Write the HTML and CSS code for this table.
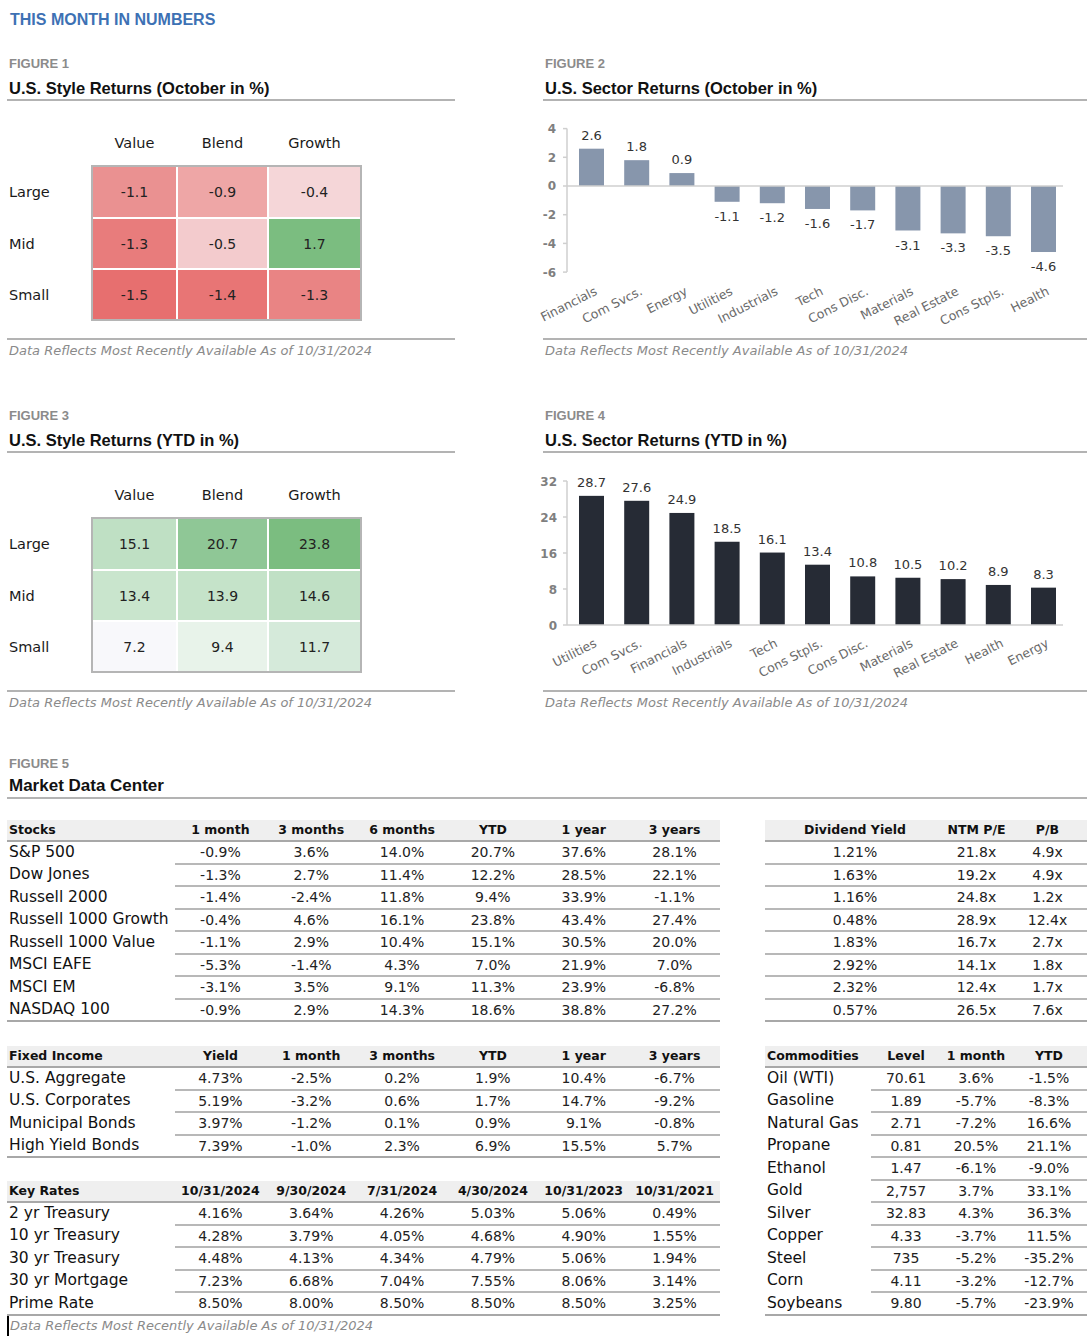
FILE: index.html
```html
<!DOCTYPE html>
<html lang="en">
<head>
<meta charset="utf-8">
<title>This Month in Numbers</title>
<link rel="stylesheet" href="styles.css">
</head>
<body>
<div class="page">
  <h1 class="page-title">THIS MONTH IN NUMBERS</h1>

  <div class="figs">
    <section class="fig">
      <div class="fig-label">FIGURE 1</div>
      <h2 class="fig-title">U.S. Style Returns (October in %)</h2>
      <div class="fig-body">
        <div class="heat">
          <div class="heat-cols"><span>Value</span><span>Blend</span><span>Growth</span></div>
          <div class="heat-main">
            <div class="heat-rows"><span>Large</span><span>Mid</span><span>Small</span></div>
            <div class="heat-grid">
              <div class="cell" style="background:#ea9191">-1.1</div>
              <div class="cell" style="background:#eea6a6">-0.9</div>
              <div class="cell" style="background:#f5d6d8">-0.4</div>
              <div class="cell" style="background:#e87c7c">-1.3</div>
              <div class="cell" style="background:#f3cbcd">-0.5</div>
              <div class="cell" style="background:#7bbd80">1.7</div>
              <div class="cell" style="background:#e76f6f">-1.5</div>
              <div class="cell" style="background:#e87575">-1.4</div>
              <div class="cell" style="background:#e98484">-1.3</div>
            </div>
          </div>
        </div>
      </div>
      <div class="fig-note">Data Reflects Most Recently Available As of 10/31/2024</div>
    </section>

    <section class="fig">
      <div class="fig-label">FIGURE 2</div>
      <h2 class="fig-title">U.S. Sector Returns (October in %)</h2>
      <div class="fig-body">
        <svg class="chart" width="544" height="239" viewBox="0 0 544 239">
          <g class="grid-lines">
            <line x1="24" y1="27.6" x2="24" y2="171.1"/>
            <line x1="20" y1="27.6" x2="24" y2="27.6"/>
            <line x1="20" y1="56.3" x2="24" y2="56.3"/>
            <line x1="20" y1="85" x2="24" y2="85"/>
            <line x1="20" y1="113.7" x2="24" y2="113.7"/>
            <line x1="20" y1="142.4" x2="24" y2="142.4"/>
            <line x1="20" y1="171.1" x2="24" y2="171.1"/>
          </g>
          <g class="ax" text-anchor="end">
            <text x="13" y="32">4</text>
            <text x="13" y="60.7">2</text>
            <text x="13" y="89.4">0</text>
            <text x="13" y="118.1">-2</text>
            <text x="13" y="146.8">-4</text>
            <text x="13" y="175.5">-6</text>
          </g>
          <g class="bars-light">
            <rect x="36" y="47.69" width="25" height="37.31"/>
            <rect x="81.2" y="59.17" width="25" height="25.83"/>
            <rect x="126.4" y="72.08" width="25" height="12.92"/>
            <rect x="171.6" y="85" width="25" height="15.79"/>
            <rect x="216.8" y="85" width="25" height="17.22"/>
            <rect x="262" y="85" width="25" height="22.96"/>
            <rect x="307.2" y="85" width="25" height="24.4"/>
            <rect x="352.4" y="85" width="25" height="44.49"/>
            <rect x="397.6" y="85" width="25" height="47.36"/>
            <rect x="442.8" y="85" width="25" height="50.23"/>
            <rect x="488" y="85" width="25" height="66.01"/>
          </g>
          <line class="zero" x1="24" y1="85" x2="520" y2="85"/>
          <g class="val" text-anchor="middle">
            <text x="48.5" y="38.7">2.6</text>
            <text x="93.7" y="50.2">1.8</text>
            <text x="138.9" y="63.1">0.9</text>
            <text x="184.1" y="119.8">-1.1</text>
            <text x="229.3" y="121.2">-1.2</text>
            <text x="274.5" y="127">-1.6</text>
            <text x="319.7" y="128.4">-1.7</text>
            <text x="364.9" y="148.5">-3.1</text>
            <text x="410.1" y="151.4">-3.3</text>
            <text x="455.3" y="154.2">-3.5</text>
            <text x="500.5" y="170">-4.6</text>
          </g>
          <g class="cat" text-anchor="end">
            <text transform="translate(55,193) rotate(-27)">Financials</text>
            <text transform="translate(100.2,193) rotate(-27)">Com Svcs.</text>
            <text transform="translate(145.4,193) rotate(-27)">Energy</text>
            <text transform="translate(190.6,193) rotate(-27)">Utilities</text>
            <text transform="translate(235.8,193) rotate(-27)">Industrials</text>
            <text transform="translate(281,193) rotate(-27)">Tech</text>
            <text transform="translate(326.2,193) rotate(-27)">Cons Disc.</text>
            <text transform="translate(371.4,193) rotate(-27)">Materials</text>
            <text transform="translate(416.6,193) rotate(-27)">Real Estate</text>
            <text transform="translate(461.8,193) rotate(-27)">Cons Stpls.</text>
            <text transform="translate(507,193) rotate(-27)">Health</text>
          </g>
        </svg>
      </div>
      <div class="fig-note">Data Reflects Most Recently Available As of 10/31/2024</div>
    </section>

    <section class="fig">
      <div class="fig-label">FIGURE 3</div>
      <h2 class="fig-title">U.S. Style Returns (YTD in %)</h2>
      <div class="fig-body">
        <div class="heat">
          <div class="heat-cols"><span>Value</span><span>Blend</span><span>Growth</span></div>
          <div class="heat-main">
            <div class="heat-rows"><span>Large</span><span>Mid</span><span>Small</span></div>
            <div class="heat-grid">
              <div class="cell" style="background:#bfe0c4">15.1</div>
              <div class="cell" style="background:#8fc796">20.7</div>
              <div class="cell" style="background:#7bbd80">23.8</div>
              <div class="cell" style="background:#c9e5cd">13.4</div>
              <div class="cell" style="background:#c5e3c9">13.9</div>
              <div class="cell" style="background:#c0e0c5">14.6</div>
              <div class="cell" style="background:#f8f8fb">7.2</div>
              <div class="cell" style="background:#e8f3ea">9.4</div>
              <div class="cell" style="background:#d5eada">11.7</div>
            </div>
          </div>
        </div>
      </div>
      <div class="fig-note">Data Reflects Most Recently Available As of 10/31/2024</div>
    </section>

    <section class="fig">
      <div class="fig-label">FIGURE 4</div>
      <h2 class="fig-title">U.S. Sector Returns (YTD in %)</h2>
      <div class="fig-body">
        <svg class="chart" width="544" height="239" viewBox="0 0 544 239">
          <g class="grid-lines">
            <line x1="24" y1="28" x2="24" y2="172"/>
            <line x1="20" y1="28" x2="24" y2="28"/>
            <line x1="20" y1="64" x2="24" y2="64"/>
            <line x1="20" y1="100" x2="24" y2="100"/>
            <line x1="20" y1="136" x2="24" y2="136"/>
            <line x1="20" y1="172" x2="24" y2="172"/>
          </g>
          <g class="ax" text-anchor="end">
            <text x="14" y="32.5">32</text>
            <text x="14" y="68.5">24</text>
            <text x="14" y="104.5">16</text>
            <text x="14" y="140.5">8</text>
            <text x="14" y="176.5">0</text>
          </g>
          <g class="bars-dark">
            <rect x="36" y="42.85" width="25" height="129.15"/>
            <rect x="81.2" y="47.8" width="25" height="124.2"/>
            <rect x="126.4" y="59.95" width="25" height="112.05"/>
            <rect x="171.6" y="88.75" width="25" height="83.25"/>
            <rect x="216.8" y="99.55" width="25" height="72.45"/>
            <rect x="262" y="111.7" width="25" height="60.3"/>
            <rect x="307.2" y="123.4" width="25" height="48.6"/>
            <rect x="352.4" y="124.75" width="25" height="47.25"/>
            <rect x="397.6" y="126.1" width="25" height="45.9"/>
            <rect x="442.8" y="131.95" width="25" height="40.05"/>
            <rect x="488" y="134.65" width="25" height="37.35"/>
          </g>
          <line class="zero" x1="24" y1="172" x2="520" y2="172"/>
          <g class="val" text-anchor="middle">
            <text x="48.5" y="33.9">28.7</text>
            <text x="93.7" y="38.8">27.6</text>
            <text x="138.9" y="50.95">24.9</text>
            <text x="184.1" y="79.75">18.5</text>
            <text x="229.3" y="90.55">16.1</text>
            <text x="274.5" y="102.7">13.4</text>
            <text x="319.7" y="114.4">10.8</text>
            <text x="364.9" y="115.75">10.5</text>
            <text x="410.1" y="117.1">10.2</text>
            <text x="455.3" y="122.95">8.9</text>
            <text x="500.5" y="125.65">8.3</text>
          </g>
          <g class="cat" text-anchor="end">
            <text transform="translate(54.5,193) rotate(-27)">Utilities</text>
            <text transform="translate(99.7,193) rotate(-27)">Com Svcs.</text>
            <text transform="translate(144.9,193) rotate(-27)">Financials</text>
            <text transform="translate(190.1,193) rotate(-27)">Industrials</text>
            <text transform="translate(235.3,193) rotate(-27)">Tech</text>
            <text transform="translate(280.5,193) rotate(-27)">Cons Stpls.</text>
            <text transform="translate(325.7,193) rotate(-27)">Cons Disc.</text>
            <text transform="translate(370.9,193) rotate(-27)">Materials</text>
            <text transform="translate(416.1,193) rotate(-27)">Real Estate</text>
            <text transform="translate(461.3,193) rotate(-27)">Health</text>
            <text transform="translate(506.5,193) rotate(-27)">Energy</text>
          </g>
        </svg>
      </div>
      <div class="fig-note">Data Reflects Most Recently Available As of 10/31/2024</div>
    </section>
  </div>

  <section class="fig fig-wide">
    <div class="fig-label">FIGURE 5</div>
    <h2 class="fig-title">Market Data Center</h2>
  </section>

  <div class="mdc">
    <table class="dt stocks">
      <colgroup><col class="c-lab"><col><col><col><col><col><col></colgroup>
      <thead><tr><th class="lab">Stocks</th><th>1 month</th><th>3 months</th><th>6 months</th><th>YTD</th><th>1 year</th><th>3 years</th></tr></thead>
      <tbody>
        <tr><td class="lab">S&amp;P 500</td><td>-0.9%</td><td>3.6%</td><td>14.0%</td><td>20.7%</td><td>37.6%</td><td>28.1%</td></tr>
        <tr><td class="lab">Dow Jones</td><td>-1.3%</td><td>2.7%</td><td>11.4%</td><td>12.2%</td><td>28.5%</td><td>22.1%</td></tr>
        <tr><td class="lab">Russell 2000</td><td>-1.4%</td><td>-2.4%</td><td>11.8%</td><td>9.4%</td><td>33.9%</td><td>-1.1%</td></tr>
        <tr><td class="lab">Russell 1000 Growth</td><td>-0.4%</td><td>4.6%</td><td>16.1%</td><td>23.8%</td><td>43.4%</td><td>27.4%</td></tr>
        <tr><td class="lab">Russell 1000 Value</td><td>-1.1%</td><td>2.9%</td><td>10.4%</td><td>15.1%</td><td>30.5%</td><td>20.0%</td></tr>
        <tr><td class="lab">MSCI EAFE</td><td>-5.3%</td><td>-1.4%</td><td>4.3%</td><td>7.0%</td><td>21.9%</td><td>7.0%</td></tr>
        <tr><td class="lab">MSCI EM</td><td>-3.1%</td><td>3.5%</td><td>9.1%</td><td>11.3%</td><td>23.9%</td><td>-6.8%</td></tr>
        <tr><td class="lab">NASDAQ 100</td><td>-0.9%</td><td>2.9%</td><td>14.3%</td><td>18.6%</td><td>38.8%</td><td>27.2%</td></tr>
      </tbody>
    </table>

    <table class="dt valuation">
      <colgroup><col class="c-dy"><col class="c-pe"><col></colgroup>
      <thead><tr><th>Dividend Yield</th><th>NTM P/E</th><th>P/B</th></tr></thead>
      <tbody>
        <tr><td>1.21%</td><td>21.8x</td><td>4.9x</td></tr>
        <tr><td>1.63%</td><td>19.2x</td><td>4.9x</td></tr>
        <tr><td>1.16%</td><td>24.8x</td><td>1.2x</td></tr>
        <tr><td>0.48%</td><td>28.9x</td><td>12.4x</td></tr>
        <tr><td>1.83%</td><td>16.7x</td><td>2.7x</td></tr>
        <tr><td>2.92%</td><td>14.1x</td><td>1.8x</td></tr>
        <tr><td>2.32%</td><td>12.4x</td><td>1.7x</td></tr>
        <tr><td>0.57%</td><td>26.5x</td><td>7.6x</td></tr>
      </tbody>
    </table>

    <div class="mdc-stack">
      <table class="dt fixed">
        <colgroup><col class="c-lab"><col><col><col><col><col><col></colgroup>
        <thead><tr><th class="lab">Fixed Income</th><th>Yield</th><th>1 month</th><th>3 months</th><th>YTD</th><th>1 year</th><th>3 years</th></tr></thead>
        <tbody>
          <tr><td class="lab">U.S. Aggregate</td><td>4.73%</td><td>-2.5%</td><td>0.2%</td><td>1.9%</td><td>10.4%</td><td>-6.7%</td></tr>
          <tr><td class="lab">U.S. Corporates</td><td>5.19%</td><td>-3.2%</td><td>0.6%</td><td>1.7%</td><td>14.7%</td><td>-9.2%</td></tr>
          <tr><td class="lab">Municipal Bonds</td><td>3.97%</td><td>-1.2%</td><td>0.1%</td><td>0.9%</td><td>9.1%</td><td>-0.8%</td></tr>
          <tr><td class="lab">High Yield Bonds</td><td>7.39%</td><td>-1.0%</td><td>2.3%</td><td>6.9%</td><td>15.5%</td><td>5.7%</td></tr>
        </tbody>
      </table>

      <table class="dt rates">
        <colgroup><col class="c-lab"><col><col><col><col><col><col></colgroup>
        <thead><tr><th class="lab">Key Rates</th><th>10/31/2024</th><th>9/30/2024</th><th>7/31/2024</th><th>4/30/2024</th><th>10/31/2023</th><th>10/31/2021</th></tr></thead>
        <tbody>
          <tr><td class="lab">2 yr Treasury</td><td>4.16%</td><td>3.64%</td><td>4.26%</td><td>5.03%</td><td>5.06%</td><td>0.49%</td></tr>
          <tr><td class="lab">10 yr Treasury</td><td>4.28%</td><td>3.79%</td><td>4.05%</td><td>4.68%</td><td>4.90%</td><td>1.55%</td></tr>
          <tr><td class="lab">30 yr Treasury</td><td>4.48%</td><td>4.13%</td><td>4.34%</td><td>4.79%</td><td>5.06%</td><td>1.94%</td></tr>
          <tr><td class="lab">30 yr Mortgage</td><td>7.23%</td><td>6.68%</td><td>7.04%</td><td>7.55%</td><td>8.06%</td><td>3.14%</td></tr>
          <tr><td class="lab">Prime Rate</td><td>8.50%</td><td>8.00%</td><td>8.50%</td><td>8.50%</td><td>8.50%</td><td>3.25%</td></tr>
        </tbody>
      </table>
    </div>

    <table class="dt commod">
      <colgroup><col class="c-clab"><col class="c-lvl"><col class="c-lvl"><col></colgroup>
      <thead><tr><th class="lab">Commodities</th><th>Level</th><th>1 month</th><th>YTD</th></tr></thead>
      <tbody>
        <tr><td class="lab">Oil (WTI)</td><td>70.61</td><td>3.6%</td><td>-1.5%</td></tr>
        <tr><td class="lab">Gasoline</td><td>1.89</td><td>-5.7%</td><td>-8.3%</td></tr>
        <tr><td class="lab">Natural Gas</td><td>2.71</td><td>-7.2%</td><td>16.6%</td></tr>
        <tr><td class="lab">Propane</td><td>0.81</td><td>20.5%</td><td>21.1%</td></tr>
        <tr><td class="lab">Ethanol</td><td>1.47</td><td>-6.1%</td><td>-9.0%</td></tr>
        <tr><td class="lab">Gold</td><td>2,757</td><td>3.7%</td><td>33.1%</td></tr>
        <tr><td class="lab">Silver</td><td>32.83</td><td>4.3%</td><td>36.3%</td></tr>
        <tr><td class="lab">Copper</td><td>4.33</td><td>-3.7%</td><td>11.5%</td></tr>
        <tr><td class="lab">Steel</td><td>735</td><td>-5.2%</td><td>-35.2%</td></tr>
        <tr><td class="lab">Corn</td><td>4.11</td><td>-3.2%</td><td>-12.7%</td></tr>
        <tr><td class="lab">Soybeans</td><td>9.80</td><td>-5.7%</td><td>-23.9%</td></tr>
      </tbody>
    </table>
  </div>

  <div class="final-note">Data Reflects Most Recently Available As of 10/31/2024</div>
</div>
</body>
</html>
```

FILE: styles.css
```css
* { box-sizing: border-box; }

body {
  margin: 0;
  background: #ffffff;
  font-family: "DejaVu Sans", sans-serif;
  color: #1a1a1a;
}

.page {
  width: 1092px;
  padding: 10px 5px 0 7px;
}

.page-title {
  margin: 0 0 0 3px;
  font: bold 16px/20px "Liberation Sans", Arial, sans-serif;
  color: #3d71b4;
}

.figs {
  display: grid;
  grid-template-columns: 448px 544px;
  column-gap: 88px;
  row-gap: 49px;
  margin-top: 26px;
}

.fig-label {
  padding-left: 2px;
  font: bold 13px/16px "Liberation Sans", Arial, sans-serif;
  color: #8b8b8b;
}

.fig-title {
  margin: 5px 0 0;
  padding-left: 2px;
  font: bold 16.5px/22px "Liberation Sans", Arial, sans-serif;
  color: #111111;
  border-bottom: 2px solid #b3b3b3;
}

.fig-body {
  height: 239px;
  border-bottom: 2px solid #b3b3b3;
}

.fig-note {
  padding: 3px 0 0 2px;
  font: italic 13px/16px "DejaVu Sans", sans-serif;
  color: #8a8a8a;
}

.fig-wide { margin-top: 45px; }
.fig-wide .fig-title { margin-top: 3px; font-size: 17px; }

/* heatmaps */
.heat { padding-top: 32px; }

.heat-cols {
  display: grid;
  grid-template-columns: 83px 89px 91px;
  column-gap: 2px;
  margin-left: 86px;
  font-size: 14.5px;
  line-height: 20px;
  text-align: center;
  color: #1a1a1a;
}

.heat-main {
  display: flex;
  margin-top: 12px;
}

.heat-rows {
  width: 84px;
  display: grid;
  grid-template-rows: 50px 49px 49px;
  row-gap: 2px;
  padding: 2px 0 0 2px;
  align-items: center;
  font-size: 14.5px;
  color: #1a1a1a;
}

.heat-grid {
  display: grid;
  grid-template-columns: 83px 89px 91px;
  grid-template-rows: 50px 49px 49px;
  gap: 2px;
  border: 2px solid #b5b5b5;
  background: #ffffff;
}

.cell {
  display: flex;
  align-items: center;
  justify-content: center;
  font-size: 14px;
  color: #222222;
}

/* charts */
.chart { display: block; overflow: visible; }
.grid-lines line, .zero { stroke: #cfcfcf; stroke-width: 1.5; }
.ax { font: bold 12px "DejaVu Sans", sans-serif; fill: #7f7f7f; }
.val { font: 13px "DejaVu Sans", sans-serif; fill: #333333; }
.cat { font: 12.5px "DejaVu Sans", sans-serif; fill: #6a6a6a; }
.bars-light rect { fill: #8796ac; }
.bars-dark rect { fill: #262b35; }

/* market data center */
.mdc {
  display: grid;
  grid-template-columns: 713px 322px;
  column-gap: 45px;
  row-gap: 24px;
  align-items: start;
  margin-top: 21px;
}

.mdc-stack {
  display: flex;
  flex-direction: column;
  gap: 23px;
}

.dt {
  width: 100%;
  border-collapse: separate;
  border-spacing: 0;
  table-layout: fixed;
}

.dt th {
  height: 22px;
  padding: 0;
  background: #efefef;
  border-bottom: 2px solid #a8a8a8;
  font: bold 12.5px/1 "DejaVu Sans", sans-serif;
  color: #111111;
  text-align: center;
  white-space: nowrap;
}

.dt td {
  height: 22.5px;
  padding: 0;
  border-bottom: 2px solid #b8b8b8;
  font-size: 14px;
  line-height: 1;
  color: #222222;
  text-align: center;
  white-space: nowrap;
}

.dt th.lab {
  text-align: left;
  padding-left: 2px;
}

.dt td.lab {
  text-align: left;
  padding-left: 2px;
  font-size: 15.5px;
  color: #111111;
  border-bottom-color: transparent;
}

.dt tbody tr:last-child td { border-bottom-color: #a8a8a8; }

.stocks .c-lab, .fixed .c-lab, .rates .c-lab { width: 168px; }
.valuation .c-dy { width: 180px; }
.valuation .c-pe { width: 63px; }
.commod .c-clab { width: 106px; }
.commod .c-lvl { width: 70px; }

.final-note {
  margin-top: 0;
  padding: 2px 0 2px 1px;
  border-left: 2px solid #000000;
  font: italic 13px/16px "DejaVu Sans", sans-serif;
  color: #8a8a8a;
  width: max-content;
}
```
